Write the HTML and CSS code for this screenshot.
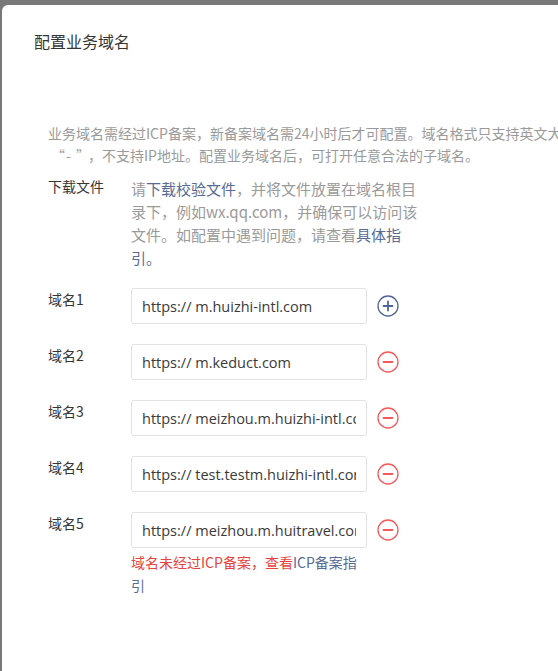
FILE: index.html
```html
<!DOCTYPE html>
<html lang="zh-CN">
<head>
<meta charset="utf-8">
<title>配置业务域名</title>
<link rel="stylesheet" href="styles.css">
</head>
<body>
<div class="modal">
  <div class="modal-title">配置业务域名</div>
  <div class="modal-body">
    <p class="desc"><span class="desc-line">业务域名需经过ICP备案，新备案域名需24小时后才可配置。域名格式只支持英文大小写字母、数字及</span><span class="desc-line"><span class="quote">“- ”</span>，不支持IP地址。配置业务域名后，可打开任意合法的子域名。</span></p>

    <div class="row">
      <div class="label">下载文件</div>
      <div class="help">请<a class="link">下载校验文件</a>，并将文件放置在域名根目<br>录下，例如wx.qq.com，并确保可以访问该<br>文件。如配置中遇到问题，请查看<a class="link">具体指<br>引。</a></div>
    </div>

    <div class="row domain">
      <div class="label">域名1</div>
      <div class="field"><input class="input" type="text" value="https:// m.huizhi-intl.com"></div>
      <span class="icon-btn add"><svg viewBox="0 0 22 22" width="22" height="22"><circle cx="11" cy="11" r="10" fill="none" stroke="#4f6596" stroke-width="1.3"/><path d="M6.5 11h9M11 6.5v9" stroke="#4f6596" stroke-width="1.8" stroke-linecap="round"/></svg></span>
    </div>

    <div class="row domain">
      <div class="label">域名2</div>
      <div class="field"><input class="input" type="text" value="https:// m.keduct.com"></div>
      <span class="icon-btn del"><svg viewBox="0 0 22 22" width="22" height="22"><circle cx="11" cy="11" r="10" fill="none" stroke="#f5585b" stroke-width="1.3"/><path d="M6.5 11h9" stroke="#f5585b" stroke-width="1.8" stroke-linecap="round"/></svg></span>
    </div>

    <div class="row domain">
      <div class="label">域名3</div>
      <div class="field"><input class="input" type="text" value="https:// meizhou.m.huizhi-intl.com"></div>
      <span class="icon-btn del"><svg viewBox="0 0 22 22" width="22" height="22"><circle cx="11" cy="11" r="10" fill="none" stroke="#f5585b" stroke-width="1.3"/><path d="M6.5 11h9" stroke="#f5585b" stroke-width="1.8" stroke-linecap="round"/></svg></span>
    </div>

    <div class="row domain">
      <div class="label">域名4</div>
      <div class="field"><input class="input" type="text" value="https:// test.testm.huizhi-intl.com"></div>
      <span class="icon-btn del"><svg viewBox="0 0 22 22" width="22" height="22"><circle cx="11" cy="11" r="10" fill="none" stroke="#f5585b" stroke-width="1.3"/><path d="M6.5 11h9" stroke="#f5585b" stroke-width="1.8" stroke-linecap="round"/></svg></span>
    </div>

    <div class="row domain">
      <div class="label">域名5</div>
      <div class="field">
        <input class="input" type="text" value="https:// meizhou.m.huitravel.com">
        <div class="error">域名未经过ICP备案，查看<a class="link">ICP备案指引</a></div>
      </div>
      <span class="icon-btn del"><svg viewBox="0 0 22 22" width="22" height="22"><circle cx="11" cy="11" r="10" fill="none" stroke="#f5585b" stroke-width="1.3"/><path d="M6.5 11h9" stroke="#f5585b" stroke-width="1.8" stroke-linecap="round"/></svg></span>
    </div>
  </div>
</div>
</body>
</html>
```

FILE: styles.css
```css
html, body {
  margin: 0;
  padding: 0;
  height: 100%;
}
body {
  background: #787878;
  overflow: hidden;
  font-family: "Noto Sans CJK SC", "Noto Sans", sans-serif;
  color: #333;
}
.modal {
  margin: 5px 0 0 2px;
  width: 640px;
  height: 720px;
  background: #fff;
  border-radius: 6px 0 0 0;
}
.modal-title {
  padding: 25px 0 0 32px;
  font-size: 16px;
  line-height: 22px;
  color: #353535;
}
.modal-body {
  padding: 0 0 0 46px;
}
.desc {
  margin: 70px 0 9px 0;
  font-size: 14px;
  line-height: 22px;
  color: #9a9a9a;
}
.desc-line {
  display: block;
  white-space: nowrap;
}
.quote {
  padding-left: 3px;
  padding-right: 4px;
  letter-spacing: 1px;
}
.row {
  display: flex;
  align-items: flex-start;
}
.label {
  width: 83px;
  flex: none;
  font-size: 14px;
  line-height: 22px;
  color: #353535;
}
.help {
  padding-top: 2px;
  width: 320px;
  font-size: 15px;
  line-height: 23px;
  color: #9a9a9a;
}
.link {
  color: #576b95;
  text-decoration: none;
}
.domain {
  margin-top: 19px;
}
.row.domain + .row.domain {
  margin-top: 20px;
}
.field {
  width: 236px;
  flex: none;
}
.input {
  box-sizing: border-box;
  display: block;
  width: 236px;
  height: 36px;
  margin: 0;
  padding: 0 10px;
  border: 1px solid #e2e2e6;
  border-radius: 3px;
  background: #fff;
  font-family: "Open Sans", "Noto Sans CJK SC", sans-serif;
  font-size: 14.5px;
  color: #3a3a3a;
  outline: none;
}
.icon-btn {
  display: flex;
  margin: 7px 0 0 10px;
  width: 22px;
  height: 22px;
}
.error {
  margin-top: 3px;
  font-size: 14px;
  line-height: 23px;
  color: #e64340;
}
```
